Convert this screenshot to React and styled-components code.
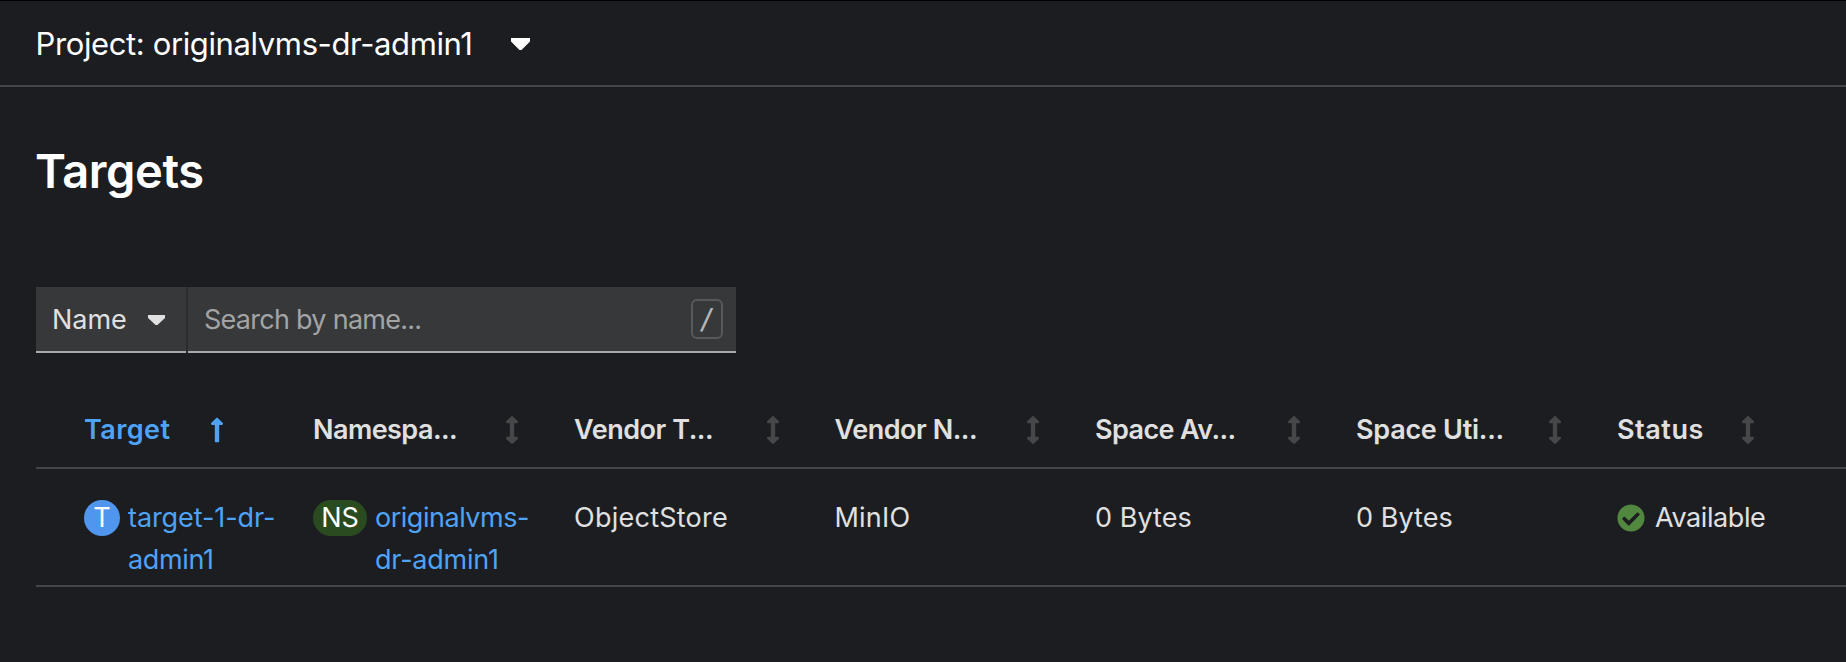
import React from "react";
import styled, { createGlobalStyle } from "styled-components";
import { FaArrowsAltV, FaCheckCircle, FaLongArrowAltUp } from "react-icons/fa";

const GlobalStyle = createGlobalStyle`
  *, *::before, *::after { box-sizing: border-box; }
  html, body { margin: 0; background: #1c1d21; }
  body {
    font-family: Inter, "Liberation Sans", sans-serif;
    font-size: 27px;
    line-height: 42px;
    color: #e0e0e0;
    overflow: hidden;
  }
`;

const Page = styled.div`
  height: 662px;
  overflow: hidden;
  background: #1c1d21;
`;

const ProjectBar = styled.header`
  display: flex;
  align-items: center;
  gap: 38px;
  height: 87px;
  padding: 2px 0 0 35.5px;
  border-top: 1px solid #000;
  border-bottom: 2px solid #444548;
  color: #fff;
`;

const ProjectName = styled.span`
  font-size: 31px;
  letter-spacing: -0.38px;
  white-space: nowrap;
`;

const Content = styled.main`
  padding: 56px 0 0 36px;
`;

const Title = styled.h1`
  margin: 0 0 0 -1px;
  height: 56px;
  font-size: 47px;
  line-height: 56px;
  font-weight: 600;
  letter-spacing: -0.4px;
  color: #fff;
`;

const Toolbar = styled.div`
  display: flex;
  gap: 2px;
  width: 700px;
  height: 66px;
  margin-top: 88px;
  background: #2b2c2f;
`;

const FilterToggle = styled.button`
  display: flex;
  align-items: center;
  justify-content: space-between;
  width: 150px;
  padding: 2px 21px 0 16px;
  border: 0;
  border-bottom: 2px solid #a8a9ab;
  background: #373839;
  color: inherit;
  font: inherit;
  letter-spacing: -0.05px;
`;

const SearchField = styled.div`
  display: flex;
  flex: 1;
  align-items: center;
  justify-content: space-between;
  padding: 0 13px 0 16px;
  border-bottom: 2px solid #a8a9ab;
  background: #373839;
`;

const Placeholder = styled.span`
  padding-top: 2px;
  letter-spacing: -0.73px;
  color: #a3a4a6;
`;

const Shortcut = styled.kbd`
  display: flex;
  align-items: center;
  justify-content: center;
  width: 32px;
  height: 40px;
  padding-top: 2px;
  border: 2px solid #58595b;
  border-radius: 6px;
  font: 500 28px/34px "DejaVu Sans Mono", monospace;
  color: #b4b5b7;
`;

const Caret = styled.svg`
  display: block;
  width: ${(p) => p.$width}px;
  height: ${(p) => p.$height}px;
  fill: currentColor;
`;

const Table = styled.div`
  margin-top: 39px;
`;

const Row = styled.div`
  display: grid;
  grid-template-columns: 229px 261px 260.5px 260.5px 261px 261px 1fr;
  height: ${(p) => p.$height}px;
  padding: ${(p) => p.$top}px 0 0 48px;
  border-bottom: 2px solid #444548;
`;

const HeaderCell = styled.div`
  display: flex;
  align-items: center;
  height: 42px;
  font-weight: 600;
  color: ${(p) => (p.$active ? "#4fa3f5" : "#e0e0e0")};
`;

const HeaderLabel = styled.span`
  width: ${(p) => p.$width}px;
  letter-spacing: ${(p) => p.$spacing}px;
  white-space: nowrap;
`;

const SortIcon = styled.span`
  display: flex;
  justify-content: center;
  width: 14px;
  font-size: 28px;
  color: ${(p) => (p.$active ? "inherit" : "#464749")};

  svg { flex: none; }
`;

const Cell = styled.div`
  display: flex;
  align-items: flex-start;
  letter-spacing: ${(p) => p.$spacing || 0}px;
  white-space: nowrap;
`;

const Badge = styled.span`
  display: flex;
  align-items: center;
  justify-content: center;
  flex: none;
  width: ${(p) => p.$width}px;
  height: 36px;
  margin: 3px 8px 0 0;
  border-radius: 18px;
  background: ${(p) => p.$color};
  color: #fff;
`;

const ResourceLink = styled.a`
  color: #4fa3f5;
  text-decoration: none;
`;

const Line = styled.span`
  display: block;
  letter-spacing: ${(p) => p.$spacing}px;
`;

const StatusIcon = styled(FaCheckCircle)`
  width: 28px;
  height: 28px;
  margin: 7px 10px 0 0;
  color: #51873f;
`;

function CaretDown({ width, height }) {
  return (
    <Caret $width={width} $height={height} viewBox="31 192 258 163" preserveAspectRatio="none">
      <path d="M31.3 192h257.300c17.800 0 26.700 21.500 14.100 34.100L174.100 354.800c-7.800 7.800-20.500 7.800-28.300 0L17.200 226.100C4.600 213.500 13.500 192 31.300 192z" />
    </Caret>
  );
}

const columns = [
  { label: "Target", width: 126, spacing: 0.43, sorted: true },
  { label: "Namespa...", width: 191.5, spacing: -0.55 },
  { label: "Vendor T...", width: 192, spacing: -0.45 },
  { label: "Vendor N...", width: 191.5, spacing: -0.46 },
  { label: "Space Av...", width: 192, spacing: -0.6 },
  { label: "Space Uti...", width: 192, spacing: -0.26 },
  { label: "Status", width: 124, spacing: 0.54 },
];

export default function App() {
  return (
    <>
      <GlobalStyle />
      <Page>
        <ProjectBar>
          <ProjectName>Project: originalvms-dr-admin1</ProjectName>
          <CaretDown width={19} height={12} />
        </ProjectBar>
        <Content>
          <Title>Targets</Title>
          <Toolbar>
            <FilterToggle>
              Name
              <CaretDown width={17} height={10} />
            </FilterToggle>
            <SearchField>
              <Placeholder>Search by name...</Placeholder>
              <Shortcut>/</Shortcut>
            </SearchField>
          </Toolbar>
          <Table>
            <Row $height={77} $top={17}>
              {columns.map((c) => (
                <HeaderCell key={c.label} $active={c.sorted}>
                  <HeaderLabel $width={c.width} $spacing={c.spacing}>{c.label}</HeaderLabel>
                  <SortIcon $active={c.sorted}>
                    {c.sorted ? <FaLongArrowAltUp /> : <FaArrowsAltV />}
                  </SortIcon>
                </HeaderCell>
              ))}
            </Row>
            <Row $height={118} $top={28}>
              <Cell>
                <Badge $width={36} $color="#5096ee">T</Badge>
                <ResourceLink>
                  <Line $spacing={-0.08}>target-1-dr-</Line>
                  <Line $spacing={-0.35}>admin1</Line>
                </ResourceLink>
              </Cell>
              <Cell>
                <Badge $width={54} $color="#2a4b20">NS</Badge>
                <ResourceLink>
                  <Line $spacing={-0.48}>originalvms-</Line>
                  <Line $spacing={-0.23}>dr-admin1</Line>
                </ResourceLink>
              </Cell>
              <Cell $spacing={0.25}>ObjectStore</Cell>
              <Cell $spacing={0.22}>MinIO</Cell>
              <Cell $spacing={0.05}>0 Bytes</Cell>
              <Cell $spacing={0.05}>0 Bytes</Cell>
              <Cell $spacing={-0.41}>
                <StatusIcon />
                Available
              </Cell>
            </Row>
          </Table>
        </Content>
      </Page>
    </>
  );
}
